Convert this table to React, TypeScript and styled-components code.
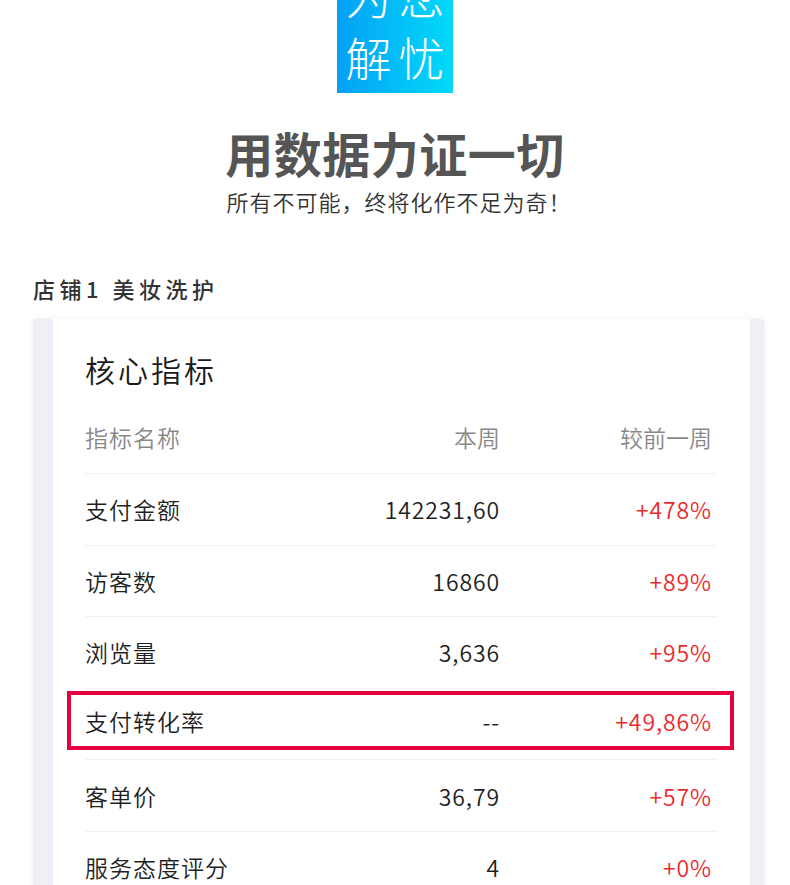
import React from "react";
import styled, { createGlobalStyle } from "styled-components";

const Global = createGlobalStyle`
  html, body { margin: 0; padding: 0; background: #ffffff; }
  body { font-family: "Noto Sans CJK SC", "Noto Sans", sans-serif; }
`;

const Page = styled.div`
  width: 790px;
  height: 885px;
  overflow: hidden;
`;

const Badge = styled.div`
  width: 116px;
  height: 93px;
  margin: 0 auto;
  overflow: hidden;
  background: linear-gradient(90deg, #05a0f6 0%, #02dafa 100%);
  display: flex;
  flex-direction: column;
  justify-content: flex-end;
  align-items: center;
  padding-bottom: 6px;
  box-sizing: border-box;
`;

const BadgeLine = styled.div`
  flex-shrink: 0;
  color: #ffffff;
  font-size: 46px;
  line-height: 62px;
  letter-spacing: 7px;
  padding-left: 7px;
  white-space: nowrap;
  font-weight: 300;
`;

const Title = styled.h1`
  margin: 29px 0 0;
  text-align: center;
  font-size: 48px;
  line-height: 60px;
  font-weight: 700;
  color: #555555;
  letter-spacing: 0.5px;
`;

const Subtitle = styled.p`
  margin: 4px 0 0;
  padding-left: 8px;
  text-align: center;
  font-size: 22px;
  line-height: 30px;
  color: #333333;
  font-weight: 350;
  letter-spacing: 1px;
`;

const ShopLabel = styled.h2`
  margin: 57px 0 16px 33px;
  font-size: 22px;
  line-height: 30px;
  font-weight: 500;
  color: #333333;
  letter-spacing: 4.5px;
`;

const Card = styled.div`
  margin: 0 26px 0 33px;
  background: #eff0f5;
  padding: 0 14px 0 20px;
  border-radius: 3px 3px 0 0;
  box-shadow: 0 0 6px rgba(0, 0, 0, 0.07);
`;

const Panel = styled.div`
  background: #ffffff;
  padding: 30px 33px 0 32px;
  box-sizing: border-box;
`;

const CardTitle = styled.h3`
  margin: 0 0 12px;
  font-size: 30px;
  line-height: 40px;
  font-weight: 350;
  color: #1a1a1a;
  letter-spacing: 3px;
`;

const Row = styled.div<{ $header?: boolean; $highlight?: boolean }>`
  position: relative;
  display: grid;
  grid-template-columns: 1fr 170px 212px;
  align-items: center;
  height: ${(p) => (p.$header ? "73px" : "71.6px")};
  box-sizing: border-box;
  padding-right: 5px;
  padding-bottom: ${(p) => (p.$highlight ? "6px" : "0")};
  border-bottom: 1px solid #f1f1f3;
  font-size: 23px;
  font-weight: 350;
  color: ${(p) => (p.$header ? "#888888" : "#1f1f1f")};
`;

const Name = styled.span`
  letter-spacing: 1px;
`;

const Value = styled.span<{ $header?: boolean }>`
  text-align: right;
  letter-spacing: ${(p) => (p.$header ? "0" : "0.9px")};
`;

const Change = styled.span<{ $header?: boolean }>`
  text-align: right;
  letter-spacing: ${(p) => (p.$header ? "0" : "0.9px")};
  color: ${(p) => (p.$header ? "#888888" : "#ea2a2d")};
`;

const Highlight = styled.div`
  position: absolute;
  left: -18px;
  right: -17px;
  top: 2px;
  height: 59px;
  border: 4px solid #e5003f;
  box-sizing: border-box;
  pointer-events: none;
`;

const rows = [
  { name: "支付金额", value: "142231,60", change: "+478%" },
  { name: "访客数", value: "16860", change: "+89%" },
  { name: "浏览量", value: "3,636", change: "+95%" },
  { name: "支付转化率", value: "--", change: "+49,86%", highlight: true },
  { name: "客单价", value: "36,79", change: "+57%" },
  { name: "服务态度评分", value: "4", change: "+0%" },
];

export default function App() {
  return (
    <>
      <Global />
      <Page>
        <Badge>
          <BadgeLine>为您</BadgeLine>
          <BadgeLine>解忧</BadgeLine>
        </Badge>
        <Title>用数据力证一切</Title>
        <Subtitle>所有不可能，终将化作不足为奇！</Subtitle>
        <ShopLabel>店铺1 美妆洗护</ShopLabel>
        <Card>
          <Panel>
            <CardTitle>核心指标</CardTitle>
            <Row $header>
              <Name>指标名称</Name>
              <Value $header>本周</Value>
              <Change $header>较前一周</Change>
            </Row>
            {rows.map((r) => (
              <Row key={r.name} $highlight={r.highlight}>
                <Name>{r.name}</Name>
                <Value>{r.value}</Value>
                <Change>{r.change}</Change>
                {r.highlight && <Highlight />}
              </Row>
            ))}
          </Panel>
        </Card>
      </Page>
    </>
  );
}
